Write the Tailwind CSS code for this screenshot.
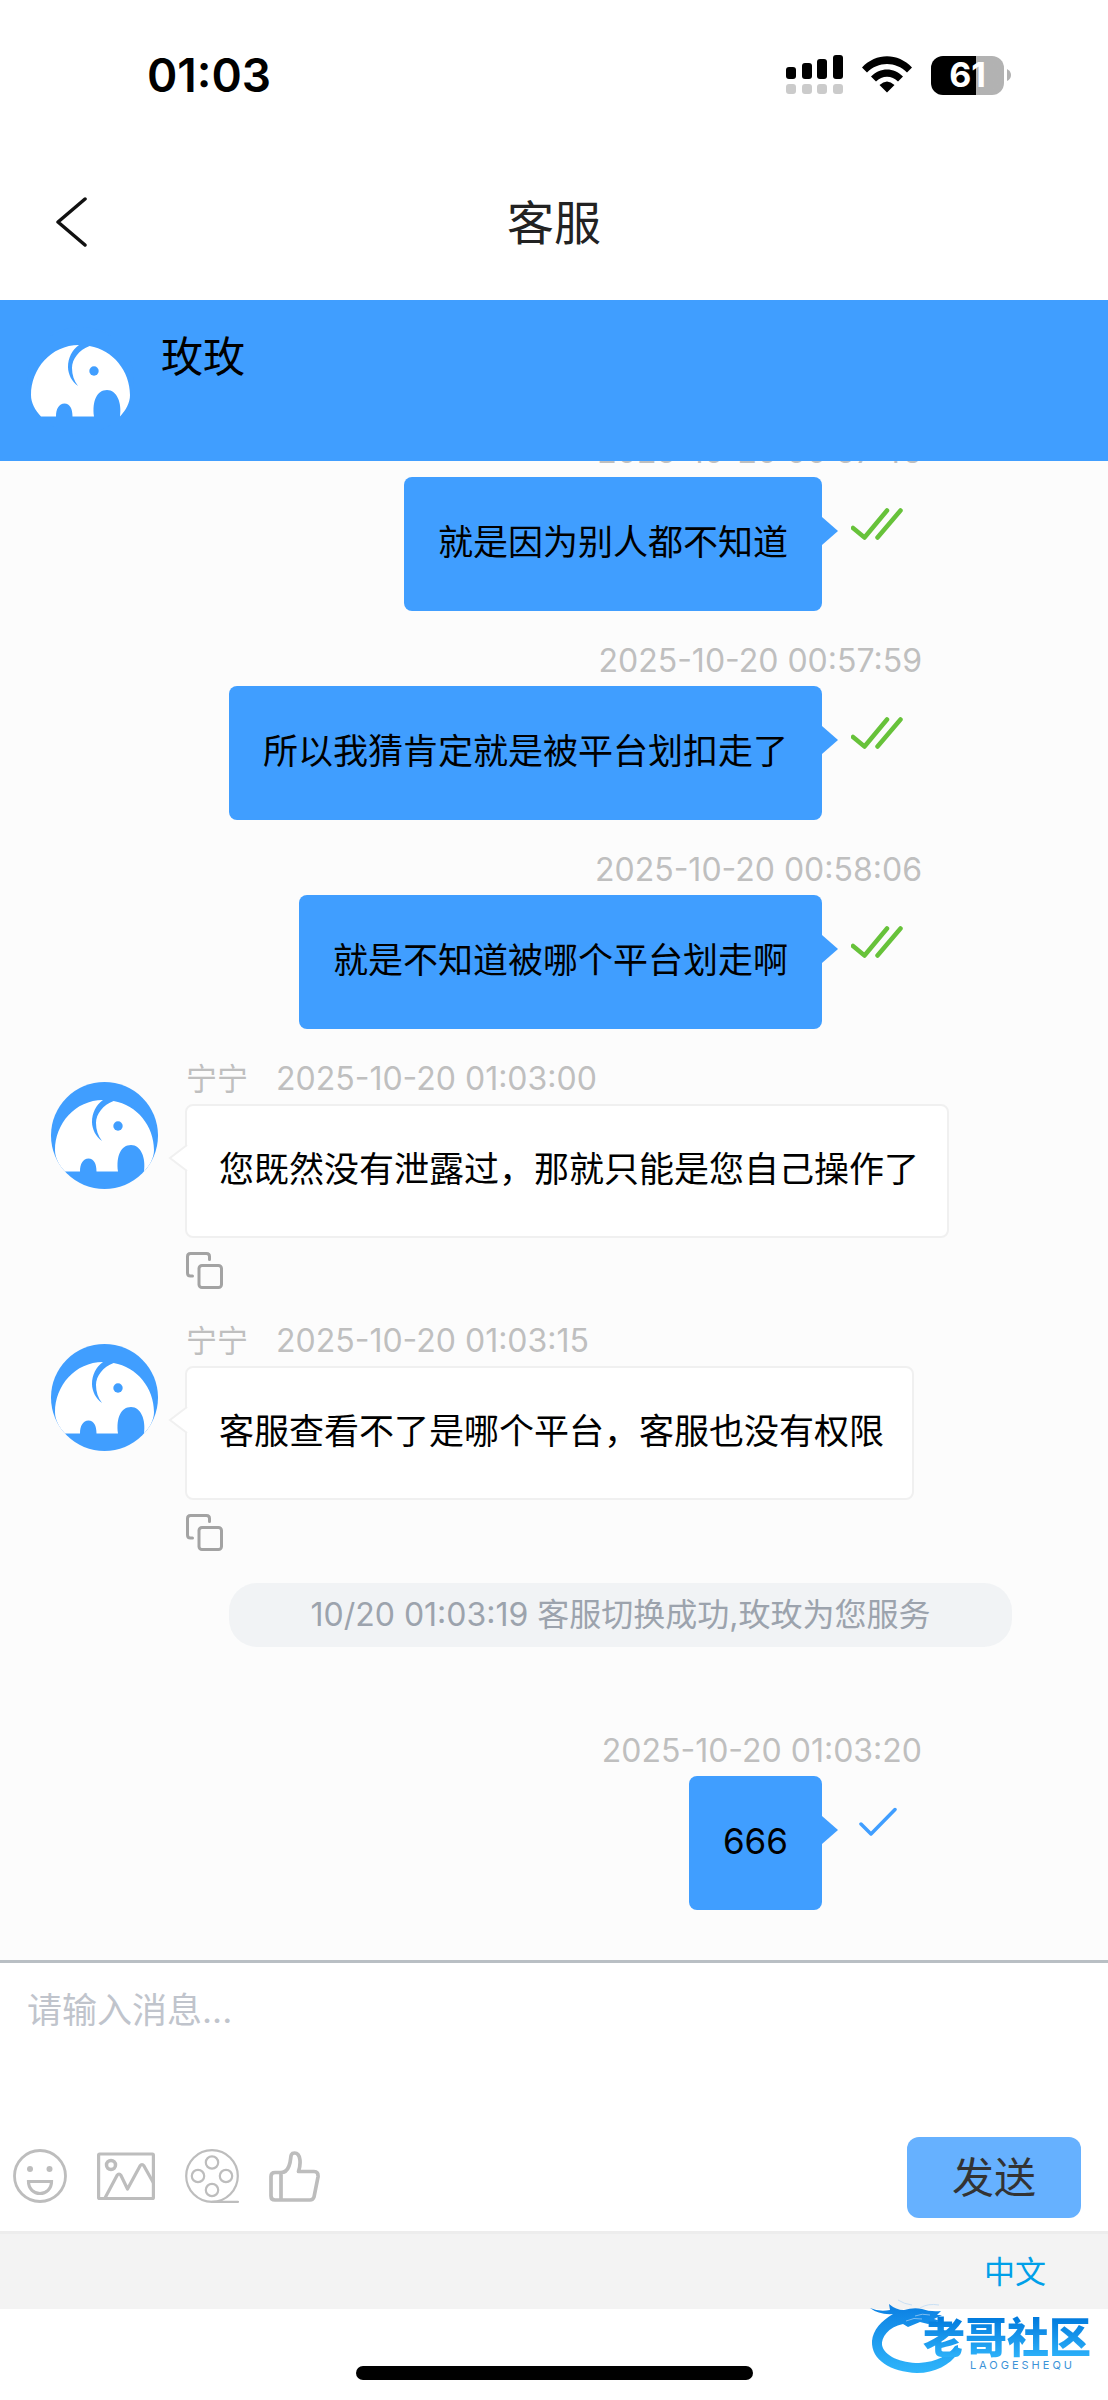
<!DOCTYPE html>
<html lang="zh-CN">
<head>
<meta charset="utf-8">
<meta name="viewport" content="width=device-width, initial-scale=1">
<title>客服</title>
<script src="https://cdn.jsdelivr.net/npm/@tailwindcss/browser@4"></script>
</head>
<body class="bg-white">
<!-- Shared symbols -->
<svg class="hidden" aria-hidden="true">
  <symbol id="avatar" viewBox="0 0 107 107">
    <circle cx="53.5" cy="53.5" r="53.5" fill="#409eff"/>
    <path fill="#fff" d="M52 18C24 18 4 42 4 68C4 76 8 83 14 89.5H29C29 82 32 76.5 37.500 76.500C43 76.500 45.500 82 45.500 89.500H67C65 74 70 63 80 63C90 63 95 76 93 89.500C99 83 103 76 103 68C103 44 86 23 62.600 19C52 23 45 32 45 41C45 48 47 54 51 59C45 55 41 47 41 40C41 31 45 23 52 18Z"/>
    <circle cx="67" cy="44" r="4.700" fill="#409eff"/>
  </symbol>
  <symbol id="read" viewBox="0 0 52 32">
    <path d="M2 20L13.500 29.500L36 2.500M26.500 29.500L49.500 2.500" fill="none" stroke="#67c23a" stroke-width="4.500" stroke-linecap="round" stroke-linejoin="round"/>
  </symbol>
  <symbol id="sent" viewBox="0 0 38 30">
    <path d="M2 17L12 27L36 2.500" fill="none" stroke="#409eff" stroke-width="3.500" stroke-linecap="round" stroke-linejoin="round"/>
  </symbol>
  <symbol id="copy" viewBox="0 0 37 37">
    <g fill="none" stroke="#a3a3a3" stroke-width="3" stroke-linecap="round">
      <path d="M23.500 7.500V4.500Q23.500 1.500 20.500 1.500H4.500Q1.500 1.500 1.500 4.500V21Q1.500 24 4.500 24H6.500"/>
      <rect x="13" y="13.500" width="22.500" height="22" rx="3"/>
    </g>
  </symbol>
  <symbol id="tail-out" viewBox="0 0 16 28"><path d="M0 0L16 14L0 28Z" fill="#409eff"/></symbol>
  <symbol id="tail-in" viewBox="0 0 20 28">
    <path d="M20 1L2 14L20 27Z" fill="#fff"/>
    <path d="M19 1L2 14L19 27" fill="none" stroke="#f0f0f0" stroke-width="2"/>
  </symbol>
</svg>

<div class="flex h-screen flex-col font-['Inter','Noto_Sans_CJK_SC',sans-serif] text-black">

  <!-- Status bar -->
  <div class="flex h-[150px] shrink-0 items-center justify-between pl-[147px] pr-[97px]">
    <time class="text-[46px] leading-none font-semibold">01:03</time>
    <div class="flex items-center gap-[19px]">
      <svg class="h-10 w-[57px]" viewBox="0 0 57 40">
        <g fill="#000"><rect x="0" y="12" width="10" height="12" rx="3"/><rect x="16" y="8" width="10" height="16" rx="3"/><rect x="31" y="4" width="10" height="20" rx="3"/><rect x="47" y="0" width="10" height="24" rx="3"/></g>
        <g fill="#cbcbcb"><rect x="0" y="29" width="10" height="10" rx="3"/><rect x="16" y="29" width="10" height="10" rx="3"/><rect x="31" y="29" width="10" height="10" rx="3"/><rect x="47" y="29" width="10" height="10" rx="3"/></g>
      </svg>
      <svg class="h-10 w-[50px]" viewBox="0 0 50 40">
        <path d="M0 12.500C14-2.500 36-2.500 50 12.500L45 17.500C34 6 16 6 5 17.500ZM9 21.500C18 12 32 12 41 21.500L36 26.500C30 20 20 20 14 26.500ZM17.500 30Q25 23 32.500 30L25 37.500Z"/>
      </svg>
      <div class="flex items-center gap-[3px]">
        <div class="flex h-[39px] w-[73px] items-center justify-center rounded-[12px] bg-linear-to-r from-black from-61% to-[#b2b2b2] to-61% text-[34px] leading-none font-bold text-white">61</div>
        <svg class="h-3 w-1" viewBox="0 0 4 12"><path d="M0 0Q4 2 4 6T0 12Z" fill="#b2b2b2"/></svg>
      </div>
    </div>
  </div>

  <!-- Title bar -->
  <header class="grid h-[150px] shrink-0 grid-cols-3 items-center px-[55px] pb-[6px]">
    <button type="button" aria-label="返回" class="justify-self-start">
      <svg class="h-[50px] w-8" viewBox="0 0 32 50"><path d="M30 2L3 25L30 48" fill="none" stroke="#111" stroke-width="3.500" stroke-linecap="round" stroke-linejoin="round"/></svg>
    </button>
    <h1 class="justify-self-center text-[47px] leading-none text-[#222]">客服</h1>
  </header>

  <!-- Agent -->
  <section class="flex h-[161px] shrink-0 gap-[27px] bg-[#409eff] px-[27px] pt-[27px]">
    <svg class="size-[107px]"><use href="#avatar"/></svg>
    <h2 class="text-[42px] leading-[60px]">玫玫</h2>
  </section>

  <!-- Conversation -->
  <main class="flex min-h-0 flex-1 flex-col justify-end overflow-hidden bg-[#fcfcfc] pb-[25px] text-[35px]">

    <article class="mb-[25px] flex flex-col items-end pl-[51px] pr-[186px]">
      <time class="text-[32px] leading-[50px] text-[#bfbfbf]">2025-10-20 00:57:46</time>
      <div class="flex">
        <p class="rounded-lg bg-[#409eff] px-[34px] pt-[35px] pb-[39px] leading-[60px]">就是因为别人都不知道</p>
        <div class="flex w-[100px] gap-[13px]">
          <svg class="mt-[40px] h-7 w-4"><use href="#tail-out"/></svg>
          <svg class="mt-[31px] h-8 w-[52px]"><use href="#read"/></svg>
        </div>
      </div>
    </article>

    <article class="mb-[25px] flex flex-col items-end pl-[51px] pr-[186px]">
      <time class="text-[32px] leading-[50px] text-[#bfbfbf]">2025-10-20 00:57:59</time>
      <div class="flex">
        <p class="rounded-lg bg-[#409eff] px-[34px] pt-[35px] pb-[39px] leading-[60px]">所以我猜肯定就是被平台划扣走了</p>
        <div class="flex w-[100px] gap-[13px]">
          <svg class="mt-[40px] h-7 w-4"><use href="#tail-out"/></svg>
          <svg class="mt-[31px] h-8 w-[52px]"><use href="#read"/></svg>
        </div>
      </div>
    </article>

    <article class="mb-[25px] flex flex-col items-end pl-[51px] pr-[186px]">
      <time class="text-[32px] leading-[50px] text-[#bfbfbf]">2025-10-20 00:58:06</time>
      <div class="flex">
        <p class="rounded-lg bg-[#409eff] px-[34px] pt-[35px] pb-[39px] leading-[60px]">就是不知道被哪个平台划走啊</p>
        <div class="flex w-[100px] gap-[13px]">
          <svg class="mt-[40px] h-7 w-4"><use href="#tail-out"/></svg>
          <svg class="mt-[31px] h-8 w-[52px]"><use href="#read"/></svg>
        </div>
      </div>
    </article>

    <article class="mb-[27px] flex gap-[27px] px-[51px]">
      <svg class="mt-7 size-[107px] shrink-0"><use href="#avatar"/></svg>
      <div class="flex flex-col items-start">
        <div class="flex gap-7 pl-px text-[31px] leading-[50px] text-[#bfbfbf]"><span>宁宁</span><time class="text-[32px]">2025-10-20 01:03:00</time></div>
        <div class="relative rounded-lg border-2 border-[#f0f0f0] bg-white pl-8 pr-7">
          <svg class="absolute top-[38px] -left-[19px] h-7 w-5"><use href="#tail-in"/></svg>
          <p class="pt-[33px] pb-[37px] leading-[60px]">您既然没有泄露过，那就只能是您自己操作了</p>
        </div>
        <button type="button" aria-label="复制" class="mt-[14px] ml-px"><svg class="size-[37px]"><use href="#copy"/></svg></button>
      </div>
    </article>

    <article class="mb-[27px] flex gap-[27px] px-[51px]">
      <svg class="mt-7 size-[107px] shrink-0"><use href="#avatar"/></svg>
      <div class="flex flex-col items-start">
        <div class="flex gap-7 pl-px text-[31px] leading-[50px] text-[#bfbfbf]"><span>宁宁</span><time class="text-[32px]">2025-10-20 01:03:15</time></div>
        <div class="relative rounded-lg border-2 border-[#f0f0f0] bg-white pl-8 pr-7">
          <svg class="absolute top-[38px] -left-[19px] h-7 w-5"><use href="#tail-in"/></svg>
          <p class="pt-[33px] pb-[37px] leading-[60px]">客服查看不了是哪个平台，客服也没有权限</p>
        </div>
        <button type="button" aria-label="复制" class="mt-[14px] ml-px"><svg class="size-[37px]"><use href="#copy"/></svg></button>
      </div>
    </article>

    <p class="mt-[5px] mr-[96px] mb-[79px] ml-[229px] rounded-[28px] bg-[#f1f3f5] text-center text-[32px] leading-[64px] text-[#9ca3ad]">10/20 01:03:19 客服切换成功,玫玫为您服务</p>

    <article class="mb-[25px] flex flex-col items-end pl-[51px] pr-[186px]">
      <time class="text-[32px] leading-[50px] text-[#bfbfbf]">2025-10-20 01:03:20</time>
      <div class="flex">
        <p class="rounded-lg bg-[#409eff] px-[34px] pt-[35px] pb-[39px] leading-[60px]">666</p>
        <div class="flex w-[100px] gap-[21px]">
          <svg class="mt-[40px] h-7 w-4"><use href="#tail-out"/></svg>
          <svg class="mt-[31px] h-[30px] w-[38px]"><use href="#sent"/></svg>
        </div>
      </div>
    </article>
  </main>

  <!-- Composer -->
  <form class="flex h-[271px] shrink-0 flex-col border-t-3 border-[#b9bfc4] bg-white">
    <textarea aria-label="请输入消息" placeholder="请输入消息..." class="min-h-0 w-full flex-1 resize-none px-[27px] pt-[22px] text-[35px] leading-[50px] outline-none placeholder:text-[#c0c4cc]"></textarea>
    <div class="flex items-center justify-between pr-[27px] pb-[13px] pl-[13px]">
      <div class="flex items-center gap-[30px] pb-1">
        <button type="button" aria-label="表情">
          <svg class="size-[54px]" viewBox="0 0 54 54" fill="none" stroke="#bdbdbd" stroke-width="2.800">
            <circle cx="27" cy="27" r="25.500"/><circle cx="17" cy="20" r="3" fill="#bdbdbd" stroke="none"/><circle cx="36.500" cy="20" r="3" fill="#bdbdbd" stroke="none"/>
            <path d="M15.500 32.500H38.500C38.500 40 33 44.500 27 44.500S15.500 40 15.500 32.500Z" stroke-width="3.200"/>
          </svg>
        </button>
        <button type="button" aria-label="图片">
          <svg class="h-[54px] w-[58px]" viewBox="0 0 58 54" fill="none" stroke="#bdbdbd" stroke-width="3.200" stroke-linejoin="round">
            <rect x="1.600" y="5" width="54.800" height="44.500" rx="1"/><circle cx="14" cy="16" r="4.500" stroke-width="3.500"/>
            <path d="M8 49L20 26.500Q22 23.500 24 26.500L30.500 40L43 17Q45 14 47 17L56.500 34"/>
          </svg>
        </button>
        <button type="button" aria-label="视频">
          <svg class="size-[54px]" viewBox="0 0 54 54" fill="none" stroke="#bdbdbd" stroke-width="2.200">
            <circle cx="27" cy="27" r="25.800"/><circle cx="27" cy="13.500" r="6.200"/><circle cx="27" cy="41" r="6.200"/><circle cx="13" cy="27" r="6.200"/><circle cx="41" cy="27" r="6.200"/><path d="M27 52.800H53" stroke-linecap="round"/>
          </svg>
        </button>
        <button type="button" aria-label="点赞">
          <svg class="h-[54px] w-[51px]" viewBox="0 0 51 54" fill="none" stroke="#bdbdbd" stroke-width="3.700" stroke-linejoin="round">
            <path d="M12 23.500H6Q2 23.500 2 27.500V47Q2 51 6 51H41Q44 51 45 48L49 28Q49.500 22.500 45 22.500H29.500C32 15 32 4 25.500 4C20 4 23 10 20 17C18.500 21 16 23.500 12 23.500V51"/>
          </svg>
        </button>
      </div>
      <button type="submit" class="h-[81px] rounded-xl bg-[#66b1ff] px-[45px] text-[42px] leading-none text-[#333]">发送</button>
    </div>
  </form>

  <!-- Language -->
  <footer class="shrink-0">
    <div class="flex h-[78px] items-center justify-end border-t-3 border-[#ededed] bg-[#f3f3f3] pr-[62px] text-[31px] leading-none">
      <a href="#" class="text-[#00a0e9]">中文</a>
    </div>
    <div class="relative flex h-[91px] justify-center pt-[57px]">
      <div class="h-[14px] w-[397px] rounded-full bg-black"></div>
      <!-- Community watermark -->
      <div class="absolute -top-[10px] right-[17px] flex h-[75px] w-[221px] flex-col items-end">
        <svg class="absolute inset-0 size-full" viewBox="0 0 221 75">
          <defs><linearGradient id="wave" x1="0" y1="0" x2="0" y2="1"><stop offset="0" stop-color="#0b7fe2"/><stop offset="1" stop-color="#2fb5fb"/></linearGradient></defs>
          <path fill="url(#wave)" d="M0 9Q9 13 20 11L19 5Q26 11 34 11Q44 8 52 10Q60 13 71 12L67 16L72 16L64 20L70 22L58 25L50 23L38 28L33 25C18 28 11 39 12 46C14 57 31 64 49 64C67 63 79 56 85 47L88 46L88 54C80 66 65 74 47 74C21 73 1 61 2 42C3 31 11 22 23 15Q9 16 0 9Z"/>
          <path d="M50 9Q58 4 69 6M42 6Q34 5 28 1" fill="none" stroke="#c9e0f5" stroke-width="1"/>
          <path d="M45 17Q52 14 60 16M36 22Q44 18 52 20" fill="none" stroke="#7fbdf0" stroke-width="1"/>
        </svg>
        <div class="relative mt-[17px] bg-linear-to-b from-[#0078dc] to-[#2fb5fb] bg-clip-text text-[42px] leading-[44px] font-black text-transparent">老哥社区</div>
        <div class="relative pr-4 text-[11px] leading-none tracking-[3px] text-[#3b93d8]">LAOGESHEQU</div>
      </div>
    </div>
  </footer>
</div>
</body>
</html>
